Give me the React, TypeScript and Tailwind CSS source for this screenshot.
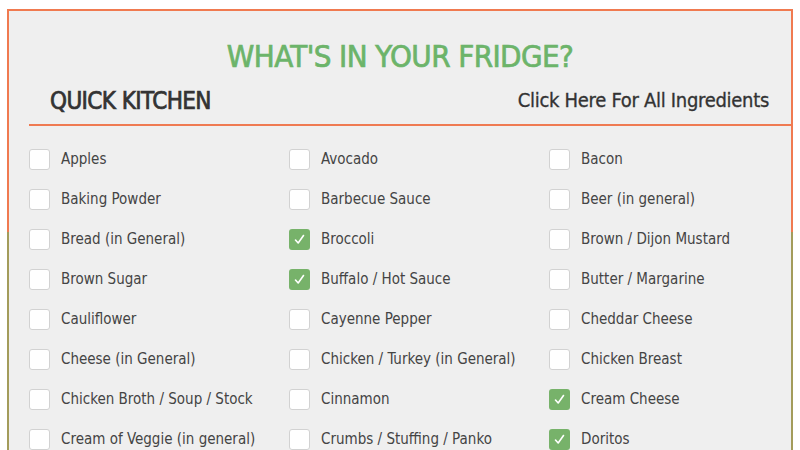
import React from "react";

const items: [string, boolean][] = [
  ["Apples", false], ["Avocado", false], ["Bacon", false],
  ["Baking Powder", false], ["Barbecue Sauce", false], ["Beer (in general)", false],
  ["Bread (in General)", false], ["Broccoli", true], ["Brown / Dijon Mustard", false],
  ["Brown Sugar", false], ["Buffalo / Hot Sauce", true], ["Butter / Margarine", false],
  ["Cauliflower", false], ["Cayenne Pepper", false], ["Cheddar Cheese", false],
  ["Cheese (in General)", false], ["Chicken / Turkey (in General)", false], ["Chicken Breast", false],
  ["Chicken Broth / Soup / Stock", false], ["Cinnamon", false], ["Cream Cheese", true],
  ["Cream of Veggie (in general)", false], ["Crumbs / Stuffing / Panko", false], ["Doritos", true],
];

const font = { fontFamily: "'DejaVu Sans Condensed', 'Liberation Sans Narrow', Roboto, sans-serif" };

function Box({ checked }: { checked: boolean }) {
  if (checked) {
    return (
      <div className="w-[21px] h-[21px] rounded-[3px] bg-[#77b26a] flex items-center justify-center shrink-0">
        <svg width="13" height="13" viewBox="0 0 13 13">
          <path d="M2.5 7 L5.2 10 L10.5 2.5" fill="none" stroke="#fff" strokeWidth="1.6" strokeLinecap="round" strokeLinejoin="round" />
        </svg>
      </div>
    );
  }
  return <div className="w-[21px] h-[21px] rounded-[3px] bg-white border border-[#d2d2d2] shrink-0" />;
}

export default function App() {
  return (
    <div className="w-[800px] h-[450px] bg-white overflow-hidden pt-[9px] px-[7px]">
      <div
        className="w-[786px] h-[600px] bg-[#efefef] border-2 [border-image:linear-gradient(to_bottom,#f07a50_0px,#f07a50_223px,#a39c5b_223px,#a39c5b_100%)_1]"
        style={font}
      >
        <div className="text-center text-[#6cb46a] text-[31px] leading-none pt-[30px] tracking-[-0.6px] [-webkit-text-stroke:0.7px_#6cb46a]">
          WHAT'S IN YOUR FRIDGE?
        </div>
        <div className="ml-5 mt-[14px] border-b-2 border-[#ef7a52] flex items-end justify-between h-[40px] pb-[11px]">
          <div className="pl-[21px] text-[24px] leading-none text-[#333] tracking-[-0.6px] [-webkit-text-stroke:0.7px_#333]">QUICK KITCHEN</div>
          <div className="pr-[22px] mb-[3px] text-[20px] leading-none text-[#333] tracking-[-0.3px] [-webkit-text-stroke:0.3px_#333]">Click Here For All Ingredients</div>
        </div>
        <div className="ml-5 mt-[23px] grid grid-cols-[260px_260px_260px] gap-y-[19px]">
          {items.map(([label, checked]) => (
            <div key={label} className="flex items-center h-[21px]">
              <Box checked={checked} />
              <span className="ml-[11px] text-[15px] text-[#444] whitespace-nowrap">{label}</span>
            </div>
          ))}
        </div>
      </div>
    </div>
  );
}
